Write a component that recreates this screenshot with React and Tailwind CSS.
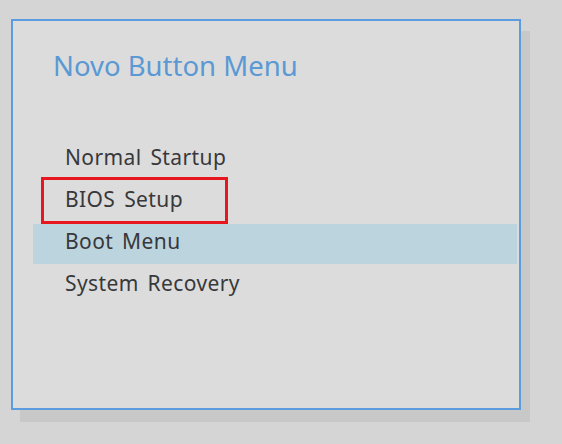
const items = ['Normal Startup', 'BIOS Setup', 'Boot Menu', 'System Recovery'];

export default function App() {
  return (
    <div className="w-[562px] h-[444px] bg-[#d5d5d6] pt-[19px] pl-[11px] overflow-hidden" style={{ fontFamily: '"Noto Sans", "DejaVu Sans", sans-serif' }}>
      <div className="w-[510px] h-[391px] border-2 border-[#5b9be0] bg-[#dcdcdd] shadow-[9px_12px_0_#c8c8c9] flex flex-col">
        <h1 className="mt-[31px] ml-[40px] text-[27.5px] leading-[28px] text-[#5a99d4]">Novo Button Menu</h1>
        <ul className="mt-[60px] ml-[20px] w-[484px] flex flex-col gap-[2px]">
          {items.map((label) => (
            <li
              key={label}
              className={`relative h-[40px] pl-[32px] pb-[6px] text-[21px] leading-[34px] text-[#38383a] tracking-[0.4px] [word-spacing:3px] ${label === 'Boot Menu' ? 'bg-[#bcd4de]' : ''}`}
            >
              {label}
              {label === 'BIOS Setup' && (
                <div className="absolute left-[8px] top-[-5px] w-[187px] h-[47px] border-[3px] border-[#e8161f]" />
              )}
            </li>
          ))}
        </ul>
      </div>
    </div>
  );
}
